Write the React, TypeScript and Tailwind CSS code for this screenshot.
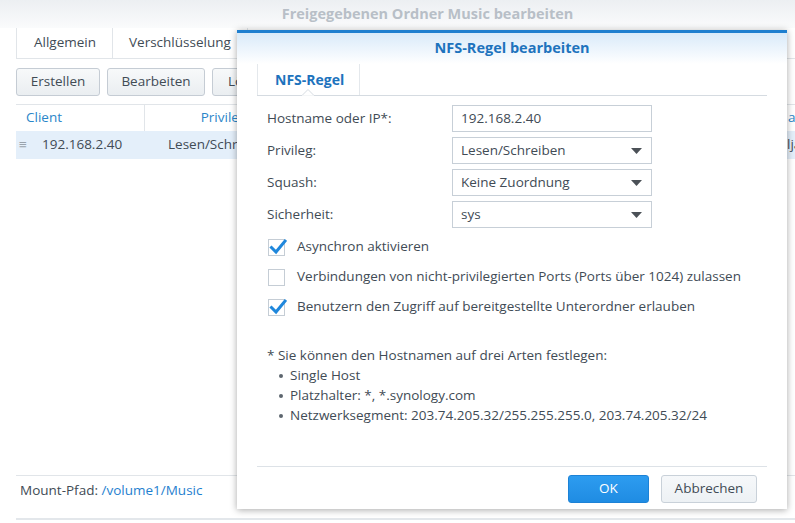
import React from "react";

function Check({ checked }: { checked: boolean }) {
  return (
    <div className="relative w-[17px] h-[17px] border border-[#c5cdd5] bg-white shrink-0">
      {checked && (
        <svg className="absolute left-[0px] top-[-2px]" width="18" height="17" viewBox="0 0 18 17">
          <path d="M2.5 9.5 L7 14 L16 3" fill="none" stroke="#1f87dc" strokeWidth="3" strokeLinecap="square" />
        </svg>
      )}
    </div>
  );
}

function Arrow() {
  return (
    <svg width="11" height="6" viewBox="0 0 11 6">
      <path d="M0 0 L11 0 L5.5 6 Z" fill="#4b5157" />
    </svg>
  );
}

function Field({ label, value, select }: { label: string; value: string; select?: boolean }) {
  return (
    <div className="flex items-center h-[27px]">
      <div className="w-[185px] shrink-0">{label}</div>
      <div className="w-[200px] h-[27px] shrink-0 border border-[#c7cfd7] bg-white flex items-center justify-between pl-[8px] pr-[9px]">
        <span>{value}</span>
        {select && <Arrow />}
      </div>
    </div>
  );
}

function Bullet({ children }: { children: React.ReactNode }) {
  return (
    <div className="h-[20px] flex items-center pl-[12px]">
      <span className="w-[4px] h-[4px] rounded-full bg-[#5d666e] shrink-0 mr-[7px]"></span>
      <span>{children}</span>
    </div>
  );
}

export default function App() {
  return (
    <div className="relative w-[795px] h-[523px] overflow-hidden bg-white text-[13.5px] text-[#414b55] font-['Open_Sans',sans-serif] leading-none">
      {/* background window */}
      <div className="flex flex-col h-full">
        <div className="h-[28px] shrink-0 flex items-center justify-center pl-[60px] bg-gradient-to-b from-[#eceff2] to-[#fafbfc] font-bold text-[14.5px] text-[#b8bfc7]">
          Freigegebenen Ordner Music bearbeiten
        </div>
        <div className="ml-[16px] flex h-[31px] shrink-0 border-b border-[#e1e5e9]">
          <div className="h-full flex items-center border-l border-[#e1e5e9] pl-[17px] pr-[16px]">Allgemein</div>
          <div className="h-full flex items-center border-l border-[#e1e5e9] px-[16px]">Verschlüsselung</div>
          <div className="h-full flex items-center border-l border-[#e1e5e9] px-[16px]">NFS-Berechtigungen</div>
        </div>
        <div className="ml-[16px] mt-[9px] flex gap-[7px] shrink-0">
          <div className="w-[84px] h-[28px] flex items-center justify-center rounded-[3px] border border-[#c5ccd4] bg-gradient-to-b from-[#f7f9fa] to-[#eaeef1]">Erstellen</div>
          <div className="w-[98px] h-[28px] flex items-center justify-center rounded-[3px] border border-[#c5ccd4] bg-gradient-to-b from-[#f7f9fa] to-[#eaeef1]">Bearbeiten</div>
          <div className="w-[84px] h-[28px] flex items-center justify-center rounded-[3px] border border-[#c5ccd4] bg-gradient-to-b from-[#f7f9fa] to-[#eaeef1]">Löschen</div>
        </div>
        <div className="ml-[16px] mt-[8px] shrink-0">
          <div className="flex h-[27px] border-t border-[#e1e5e9] text-[#2b86c9]">
            <div className="w-[129px] shrink-0 flex items-center pl-[10px] border-r border-[#e1e5e9]">Client</div>
            <div className="w-[158px] shrink-0 flex items-center justify-center border-r border-[#e1e5e9]">Privileg</div>
            <div className="w-[477px] shrink-0 flex items-center border-r border-[#e1e5e9]"></div>
            <div className="flex-1 min-w-0 flex items-center pl-[8px] whitespace-nowrap overflow-hidden">asynchron</div>
          </div>
          <div className="flex h-[28px] bg-[#e4effa]">
            <div className="w-[129px] shrink-0 flex items-center pl-[3px]">
              <span className="text-[#9aa3ab] w-[23px]">≡</span>
              <span>192.168.2.40</span>
            </div>
            <div className="w-[158px] shrink-0 flex items-center pl-[23px]">Lesen/Schreiben</div>
            <div className="w-[477px] shrink-0"></div>
            <div className="flex-1 min-w-0 flex items-center pl-[7px] whitespace-nowrap overflow-hidden">lja</div>
          </div>
        </div>
        <div className="mt-auto ml-[16px] h-[43px] border-t border-[#e1e5e9] pl-[4px] flex items-start pt-[8px] shrink-0">
          <span>Mount-Pfad:&nbsp;</span>
          <span className="text-[#1f7fcf]">/volume1/Music</span>
        </div>
        <div className="ml-[16px] h-[2px] bg-[#e3e7eb] shrink-0"></div>
        <div className="h-[3px] shrink-0"></div>
      </div>

      {/* dialog */}
      <div className="absolute left-[237px] top-[30px] w-[550px] h-[479px] bg-white border-t-[3px] border-[#1f7fcf] shadow-[0_1px_7px_rgba(0,0,0,0.35)] flex flex-col">
        <div className="h-[31px] shrink-0 flex items-center justify-center bg-gradient-to-b from-[#d9eaf9] to-white font-bold text-[14.5px] text-[#1d73bd]">
          NFS-Regel bearbeiten
        </div>
        <div className="px-[20px] flex flex-col flex-1">
          <div className="relative h-[32px] shrink-0 border-b border-[#d5dbe1] flex">
            <div className="h-full w-[103px] flex items-center pl-[17px] border-l border-r border-[#e4e8ec] font-bold text-[14px] text-[#1d73bd]">
              NFS-Regel
            </div>
            <svg className="absolute left-[45px] bottom-[-1px]" width="12" height="7" viewBox="0 0 12 7">
              <path d="M0 6.5 L6 0.5 L12 6.5" fill="white" stroke="#d5dbe1" strokeWidth="1" />
              <rect x="0" y="6.5" width="12" height="1" fill="white" />
            </svg>
          </div>
          <div className="mt-[9px] pl-[10px] flex flex-col gap-[5px]">
            <Field label="Hostname oder IP*:" value="192.168.2.40" />
            <Field label="Privileg:" value="Lesen/Schreiben" select />
            <Field label="Squash:" value="Keine Zuordnung" select />
            <Field label="Sicherheit:" value="sys" select />
          </div>
          <div className="mt-[4px] pl-[11px] flex flex-col">
            <div className="h-[30px] flex items-center gap-[12px]"><Check checked /><span>Asynchron aktivieren</span></div>
            <div className="h-[30px] flex items-center gap-[12px]"><Check checked={false} /><span>Verbindungen von nicht-privilegierten Ports (Ports über 1024) zulassen</span></div>
            <div className="h-[30px] flex items-center gap-[12px]"><Check checked /><span>Benutzern den Zugriff auf bereitgestellte Unterordner erlauben</span></div>
          </div>
          <div className="mt-[24px] pl-[10px] flex flex-col">
            <div className="h-[20px] flex items-center">* Sie können den Hostnamen auf drei Arten festlegen:</div>
            <Bullet>Single Host</Bullet>
            <Bullet>Platzhalter: *, *.synology.com</Bullet>
            <Bullet>Netzwerksegment: 203.74.205.32/255.255.255.0, 203.74.205.32/24</Bullet>
          </div>
          <div className="mt-auto border-t border-[#dde2e7] h-[43px] shrink-0 flex justify-end items-start pt-[8px] pr-[10px] gap-[12px]">
            <div className="w-[81px] h-[28px] rounded-[3px] border border-[#1c82d6] bg-gradient-to-b from-[#2d9cf0] to-[#1f8ce3] text-white flex items-center justify-center">OK</div>
            <div className="w-[96px] h-[28px] rounded-[3px] border border-[#c9d1d9] bg-gradient-to-b from-[#f6f8fa] to-[#edf1f4] flex items-center justify-center">Abbrechen</div>
          </div>
        </div>
      </div>
    </div>
  );
}
